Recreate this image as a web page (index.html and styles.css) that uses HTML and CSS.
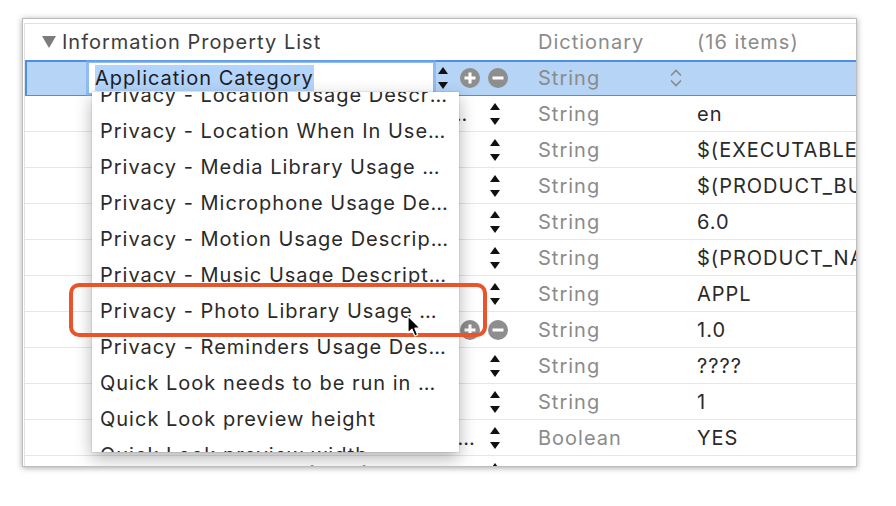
FILE: index.html
```html
<!DOCTYPE html>
<html>
<head>
<meta charset="utf-8">
<link rel="stylesheet" href="styles.css">
</head>
<body>
<div class="window">
  <div class="table">
    <div class="row header">
      <div class="key"><svg class="disc" width="14" height="12" viewBox="0 0 14 12"><path d="M0 0H14L7 12Z" fill="#7c7c7c"/></svg><span class="name">Information Property List</span></div>
      <div class="type">Dictionary</div>
      <div class="value muted">(16 items)</div>
    </div>
    <div class="row selected">
      <div class="key edit">
        <div class="field"><span class="sel">Application Category</span></div>
        <svg class="stepper" width="10" height="22" viewBox="0 0 10 22"><path d="M5 0L10 7H0Z M0 15H10L5 22Z" fill="#111"/></svg>
        <svg class="plus" width="20" height="20" viewBox="0 0 20 20"><circle cx="10" cy="10" r="10" fill="#8e8e8e"/><path d="M10 4.5v11M4.5 10h11" stroke="#fff" stroke-width="3"/></svg>
        <svg class="minus" width="20" height="20" viewBox="0 0 20 20"><circle cx="10" cy="10" r="10" fill="#8e8e8e"/><path d="M4.5 10h11" stroke="#fff" stroke-width="3"/></svg>
      </div>
      <div class="type pop"><span>String</span><svg width="12" height="20" viewBox="0 0 12 20"><path d="M1 7.5L6 2.5L11 7.5M1 12.5L6 17.5L11 12.5" fill="none" stroke="#8a8a8a" stroke-width="1.6"/></svg></div>
      <div class="value"></div>
    </div>
    <div class="row">
      <div class="key"><span class="name">Localization native development region</span><svg class="stepper" width="10" height="22" viewBox="0 0 10 22"><path d="M5 0L10 7H0Z M0 15H10L5 22Z" fill="#111"/></svg></div>
      <div class="type">String</div><div class="value">en</div>
    </div>
    <div class="row">
      <div class="key"><span class="name">Executable file</span><svg class="stepper" width="10" height="22" viewBox="0 0 10 22"><path d="M5 0L10 7H0Z M0 15H10L5 22Z" fill="#111"/></svg></div>
      <div class="type">String</div><div class="value">$(EXECUTABLE_NAME)</div>
    </div>
    <div class="row">
      <div class="key"><span class="name">Bundle identifier</span><svg class="stepper" width="10" height="22" viewBox="0 0 10 22"><path d="M5 0L10 7H0Z M0 15H10L5 22Z" fill="#111"/></svg></div>
      <div class="type">String</div><div class="value">$(PRODUCT_BUNDLE_IDENTIFIER)</div>
    </div>
    <div class="row">
      <div class="key"><span class="name">InfoDictionary version</span><svg class="stepper" width="10" height="22" viewBox="0 0 10 22"><path d="M5 0L10 7H0Z M0 15H10L5 22Z" fill="#111"/></svg></div>
      <div class="type">String</div><div class="value">6.0</div>
    </div>
    <div class="row">
      <div class="key"><span class="name">Bundle name</span><svg class="stepper" width="10" height="22" viewBox="0 0 10 22"><path d="M5 0L10 7H0Z M0 15H10L5 22Z" fill="#111"/></svg></div>
      <div class="type">String</div><div class="value">$(PRODUCT_NAME)</div>
    </div>
    <div class="row">
      <div class="key"><span class="name">Bundle OS Type code</span><svg class="stepper" width="10" height="22" viewBox="0 0 10 22"><path d="M5 0L10 7H0Z M0 15H10L5 22Z" fill="#111"/></svg></div>
      <div class="type">String</div><div class="value">APPL</div>
    </div>
    <div class="row">
      <div class="key edit"><span class="name">Bundle versions string, short</span>
        <svg class="stepper" width="10" height="22" viewBox="0 0 10 22"><path d="M5 0L10 7H0Z M0 15H10L5 22Z" fill="#111"/></svg>
        <svg class="plus" width="20" height="20" viewBox="0 0 20 20"><circle cx="10" cy="10" r="10" fill="#8e8e8e"/><path d="M10 4.5v11M4.5 10h11" stroke="#fff" stroke-width="3"/></svg>
        <svg class="minus" width="20" height="20" viewBox="0 0 20 20"><circle cx="10" cy="10" r="10" fill="#8e8e8e"/><path d="M4.5 10h11" stroke="#fff" stroke-width="3"/></svg>
      </div>
      <div class="type">String</div><div class="value">1.0</div>
    </div>
    <div class="row">
      <div class="key"><span class="name">Bundle creator OS Type code</span><svg class="stepper" width="10" height="22" viewBox="0 0 10 22"><path d="M5 0L10 7H0Z M0 15H10L5 22Z" fill="#111"/></svg></div>
      <div class="type">String</div><div class="value">????</div>
    </div>
    <div class="row">
      <div class="key"><span class="name">Bundle version</span><svg class="stepper" width="10" height="22" viewBox="0 0 10 22"><path d="M5 0L10 7H0Z M0 15H10L5 22Z" fill="#111"/></svg></div>
      <div class="type">String</div><div class="value">1</div>
    </div>
    <div class="row">
      <div class="key"><span class="name">Application requires iPhone environment</span><svg class="stepper" width="10" height="22" viewBox="0 0 10 22"><path d="M5 0L10 7H0Z M0 15H10L5 22Z" fill="#111"/></svg></div>
      <div class="type">Boolean</div><div class="value">YES</div>
    </div>
    <div class="row">
      <div class="key"><span class="name">Launch screen interface file base name</span><svg class="stepper" width="10" height="22" viewBox="0 0 10 22"><path d="M5 0L10 7H0Z M0 15H10L5 22Z" fill="#111"/></svg></div>
      <div class="type">String</div><div class="value">LaunchScreen</div>
    </div>
  </div>
  <div class="popup">
    <div class="popup-list">
      <div class="item">Privacy - Location Usage Description</div>
      <div class="item">Privacy - Location When In Use Usage Description</div>
      <div class="item">Privacy - Media Library Usage Description</div>
      <div class="item">Privacy - Microphone Usage Description</div>
      <div class="item">Privacy - Motion Usage Description</div>
      <div class="item">Privacy - Music Usage Description</div>
      <div class="item">Privacy - Photo Library Usage Description</div>
      <div class="item">Privacy - Reminders Usage Description</div>
      <div class="item">Quick Look needs to be run in main thread</div>
      <div class="item">Quick Look preview height</div>
      <div class="item">Quick Look preview width</div>
    </div>
  </div>
</div>
<div class="highlight"></div>
<svg class="cursor" width="16" height="24" viewBox="0 0 16 24"><path d="M1 1V18L5 14.2L7.8 21L10.6 19.8L7.9 13.2H13Z" fill="#000" stroke="#fff" stroke-width="1.2" stroke-linejoin="round"/></svg>
</body>
</html>
```
FILE: styles.css
```css
html, body {
  margin: 0;
  padding: 0;
  background: #fff;
}
body {
  width: 896px;
  height: 506px;
  overflow: hidden;
  position: relative;
  font-family: Inter, "Noto Sans", sans-serif;
  font-size: 20px;
  letter-spacing: 1px;
  color: #2a2a2a;
}
.window {
  margin: 18px 0 0 22px;
  width: 835px;
  height: 449px;
  box-sizing: border-box;
  border: 1px solid #bdbdbd;
  box-shadow: 0 1px 6px rgba(0,0,0,0.35);
  background: #fff;
  padding: 4px 0 0 1px;
  position: relative;
  overflow: hidden;
}
.table {
  border-top: 1px solid #e2e2e2;
  border-left: 1px solid #e2e2e2;
}
.row {
  display: grid;
  grid-template-columns: 491px 174px 1fr;
  height: 36px;
  box-sizing: border-box;
  border-bottom: 1px solid #e6e6e6;
  align-items: center;
  white-space: nowrap;
}
.key {
  display: flex;
  align-items: center;
  min-width: 0;
  padding: 0 16px 0 75px;
}
.name {
  flex: 1;
  min-width: 0;
  overflow: hidden;
  text-overflow: ellipsis;
}
.stepper {
  flex: none;
  margin-left: 12px;
}
.key.edit {
  padding-right: 8px;
}
.key.edit .stepper {
  margin-left: 5px;
}
.plus {
  flex: none;
  margin-left: 12px;
}
.minus {
  flex: none;
  margin-left: 8px;
}
.type {
  padding-left: 22px;
  color: #8b8b8b;
}
.type.pop {
  display: flex;
  align-items: center;
  justify-content: space-between;
  padding-right: 8px;
}
.value {
  padding-left: 7px;
  overflow: hidden;
}
.muted {
  color: #8b8b8b;
}
.header {
  border-bottom: none;
}
.header .key {
  padding-left: 17px;
  color: #3c3c3c;
}
.disc {
  flex: none;
  margin-right: 6px;
}
.selected {
  background: #b5d4f6;
  border-bottom: 1px solid #4d8fe2;
  box-shadow: inset 0 2px 0 #4d8fe2, inset 2px 0 0 #4d8fe2;
}
.selected .key {
  padding-left: 64px;
}
.field {
  flex: 1;
  min-width: 0;
  height: 30px;
  background: #fff;
  box-shadow: 0 0 0 3px rgba(120, 172, 238, 0.6);
  display: flex;
  align-items: center;
  padding-left: 6px;
}
.sel {
  background: #b3d4fc;
  line-height: 26px;
  color: #1e1e1e;
}
.popup {
  position: absolute;
  left: 69px;
  top: 73px;
  width: 367px;
  height: 360px;
  background: #fff;
  overflow: hidden;
  box-shadow: 0 6px 16px rgba(0,0,0,0.3), 0 0 0 1px rgba(0,0,0,0.06);
}
.popup-list {
  margin-top: -15px;
}
.item {
  height: 36px;
  line-height: 36px;
  padding: 0 10px 0 8px;
  white-space: nowrap;
  overflow: hidden;
  text-overflow: ellipsis;
  color: #2a2a2a;
}
.highlight {
  position: absolute;
  left: 69px;
  top: 283px;
  width: 418px;
  height: 54px;
  box-sizing: border-box;
  border: 4px solid #e9542b;
  border-radius: 10px;
}
.cursor {
  position: absolute;
  left: 407px;
  top: 315px;
}
```
